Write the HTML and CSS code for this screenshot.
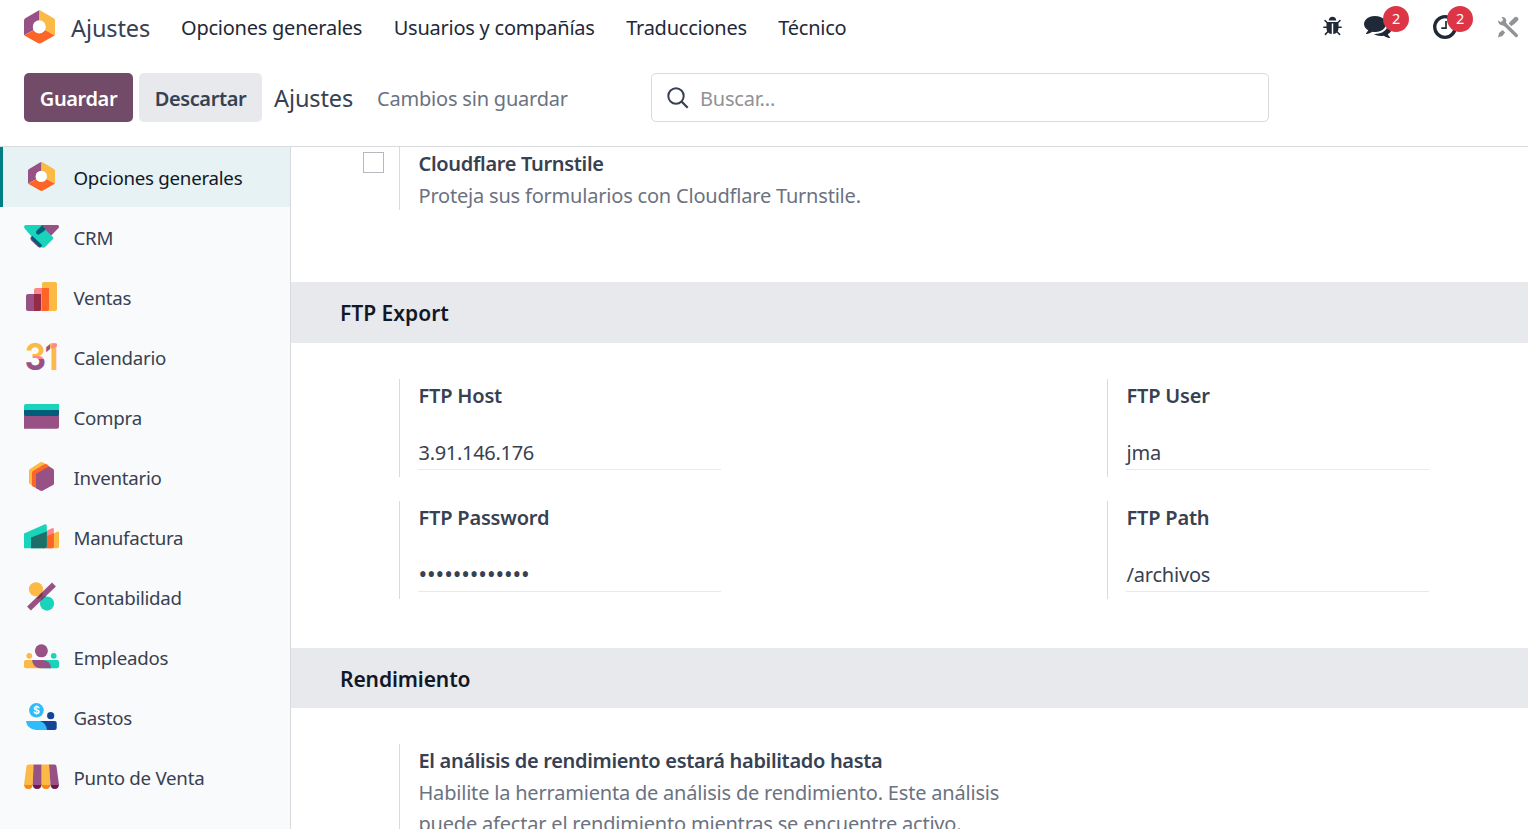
FILE: index.html
```html
<!DOCTYPE html>
<html lang="es">
<head>
<meta charset="utf-8">
<title>Ajustes</title>
<link rel="stylesheet" href="styles.css">
</head>
<body>
<svg width="0" height="0" class="defs" aria-hidden="true">
  <symbol id="hex" viewBox="0 0 27 29"><path fill="#985184" d="M13.500 0v14.500L0 21.600V8.800q0-1.300 1.100-1.900L12 .5q.8-.5 1.500-.5z"/><path fill="#fbb945" d="M13.500 0q.8 0 1.500.5l10.900 6.400q1.100.6 1.100 1.900v12.800L13.500 14.500z"/><path fill="#fc6526" d="M.3 21.600 13.500 14.500l13.200 7.100q-.2.400-.8.700L15 28.500q-1.500.8-3 0L1.100 22.300q-.6-.3-.8-.7z"/><circle cx="13.300" cy="14.400" r="5.700" fill="#fff"/></symbol>
</svg>

<header class="navbar">
  <svg class="brand-icon"><use href="#hex"/></svg>
  <span class="brand">Ajustes</span>
  <nav class="menu">
    <a>Opciones generales</a><a>Usuarios y compañías</a><a>Traducciones</a><a>Técnico</a>
  </nav>
  <div class="systray">
    <svg class="bug" viewBox="0 0 1792 1792"><path d="M1696 960q0 26-19 45t-45 19h-224q0 171-67 290l208 209q19 19 19 45t-19 45q-18 19-45 19t-45-19l-198-197q-5 5-15 13t-42 28.500-65 36.500-82 29-97 13v-896h-128v896q-51 0-101.500-13.500t-87-33-66-39-43.500-32.500l-15-14-183 207q-20 21-48 21-24 0-43-16-19-18-20.500-44.500t15.500-46.500l202-227q-58-114-58-274h-224q-26 0-45-19t-19-45 19-45 45-19h224v-294l-173-173q-19-19-19-45t19-45 45-19 45 19l173 173h844l173-173q19-19 45-19t45 19 19 45-19 45l-173 173v294h224q26 0 45 19t19 45zm-480-576h-640q0-133 93.500-226.500t226.500-93.500 226.500 93.500 93.500 226.500z"/></svg>
    <span class="tray chat">
      <svg viewBox="0 0 1792 1792"><path d="M1408 768q0 139-94 257t-256.500 186.500-353.500 68.500q-86 0-176-16-124 88-278 128-36 9-86 16h-3q-11 0-20.500-8t-11.500-21q-1-3-1-6.500t.5-6.500 2-6l2.500-5 3.500-5.500 4-5 4.500-5 4-4.500q5-6 23-25t26-29.500 22.500-29 25-38.500 20.500-44q-124-72-195-177t-71-224q0-139 94-257t256.500-186.500 353.500-68.500 353.500 68.500 256.500 186.500 94 257zm384 256q0 120-71 224.500t-195 176.500q10 24 20.500 44t25 38.500 22.500 29 26 29.500 23 25q1 1 4 4.500t4.500 5 4 5 3.500 5.500l2.500 5 2 6 .5 6.500-1 6.500q-3 14-13 22t-22 7q-50-7-86-16-154-40-278-128-90 16-176 16-271 0-472-132 58 4 88 4 161 0 309-45t264-129q125-92 192-212t67-254q0-77-23-152 129 71 204 178t75 230z"/></svg>
      <b class="badge">2</b>
    </span>
    <span class="tray clock">
      <svg viewBox="0 0 24 24"><circle cx="12" cy="12" r="10.300" fill="none" stroke="#1f2937" stroke-width="3.300"/><path d="M13 6v7.200H8.300" fill="none" stroke="#1f2937" stroke-width="1.700"/></svg>
      <b class="badge">2</b>
    </span>
    <svg class="tools" viewBox="0 0 22 22"><g stroke="#8f9499" fill="none"><path d="M6 6.500 19.300 19.500" stroke-width="3.300" stroke-linecap="round"/><path d="M13 8.700 16 6" stroke-width="4"/><path d="M16 6.200 19 3.200" stroke-width="4.600" stroke-linecap="round"/></g><path fill="#8f9499" d="M1 4.300 4 6.200 6.200 4 4.600 1Q8.300.5 9.300 4L9 7l1 1-2.500 2.600-1.200-1.200Q1 9.600 1 4.300zM5.500 14l2.600 2.600-2.600 3.400L1 21.500 2 17z"/></svg>
  </div>
</header>

<div class="panel">
  <button class="btn save">Guardar</button>
  <button class="btn discard">Descartar</button>
  <span class="crumb">Ajustes</span>
  <span class="dirty">Cambios sin guardar</span>
  <div class="search">
    <svg viewBox="0 0 22 22"><g fill="none" stroke="#374151" stroke-width="2"><circle cx="9" cy="9" r="7.700"/><path d="m14.500 14.500 6.200 6.200" stroke-width="2.300"/></g></svg>
    <span>Buscar...</span>
  </div>
</div>

<div class="body">
  <aside class="sidebar">
    <a class="tab active"><svg viewBox="0 0 35 35"><use href="#hex" x="4" y="3" width="27" height="29"/></svg><span>Opciones generales</span></a>
    <a class="tab"><svg viewBox="0 0 35 35"><path fill="#985184" d="M17 6h16.500q2.500.8 1 3L23.500 20.500 12 12zM7 17.500 18 27.500q-2.300 2.200-4.500 0l-6-5.700q-2-2-.5-4.300z"/><path fill="#1ad3bb" d="M1.500 6H17l12 12.200q.8 1-.2 2l-7.500 7.600q-2.500 1.700-4.600 0L.6 9.500Q-.8 7 1.500 6z"/><path d="m18 6.500-5.500 5.300q-1.500 3.500 2 4l5.100-3.300 2-2.200zM8.500 17 18 26q0 2.300-2.200 2.500L8 21q-1.700-2-.5-3.800z" fill="#005e7a"/></svg><span>CRM</span></a>
    <a class="tab"><svg viewBox="0 0 35 35"><path fill="#fbb945" d="M20 3h11q2 0 2 2v25q0 2-2 2H18V5q0-2 2-2z"/><path fill="#fc868b" d="M12 9h13v21q0 2-2 2H10V11q0-2 2-2z"/><path fill="#fc6526" d="M18 9h7v21q0 2-2 2h-5z"/><path fill="#985184" d="M4 15h13v15q0 2-2 2H4q-2 0-2-2V17q0-2 2-2z"/><path fill="#962b48" d="M10 15h7v15q0 2-2 2h-5z"/></svg><span>Ventas</span></a>
    <a class="tab"><svg class="wide" viewBox="0 0 35 35"><defs><linearGradient id="g3" x1="0" y1="0" x2="0" y2="1"><stop offset=".5" stop-color="#fbb945"/><stop offset=".5" stop-color="#fc868b"/><stop offset=".56" stop-color="#fc868b"/><stop offset=".56" stop-color="#985184"/></linearGradient><linearGradient id="g1"><stop offset=".4" stop-color="#985184"/><stop offset=".4" stop-color="#fbb945"/></linearGradient></defs><text class="digit" transform="translate(.8 31) scale(.9 1)" fill="url(#g3)">3</text><text class="digit" transform="translate(20.800 31) scale(.87 1)" fill="url(#g1)">1</text><path fill="#fc868b" d="m27.500 6.300 2-1.600H33v2.500L27.500 10z"/></svg><span>Calendario</span></a>
    <a class="tab"><svg viewBox="0 0 35 35"><path fill="#985184" d="M0 12h35v15.700q0 2-2 2H0z"/><path fill="#1ad3bb" d="M2 5h33v7H0V7q0-2 2-2z"/><path fill="#005e7a" d="M0 11h35v4q0 2-2 2H2q-2 0-2-2z"/></svg><span>Compra</span></a>
    <a class="tab"><svg viewBox="0 0 35 35"><path fill="#fbb945" d="M5 11.500q0-1 1-1.600L16 3.500q1.500-.8 3 0L24 6 9 27.500 6 25q-1-.6-1-1.600z"/><path fill="#fc6526" d="M8 13.500q0-1 1-1.600L20 5.500q1.500-.8 3 0L26 8 13 29.500 9 27.500q-1-.6-1-1.600z"/><path fill="#985184" d="M12 16q0-1.200 1-1.800L24 8q1-.6 2 0l3.200 2q.8.500.8 1.500v13q0 1-1 1.600L19 31.600q-1.500.8-3 0L12 29.200z"/></svg><span>Inventario</span></a>
    <a class="tab"><svg viewBox="0 0 35 35"><path fill="#fbb945" d="M26 16l8-3.500q1 0 1 1V27.300q0 2-2 2h-7z"/><path fill="#fc868b" d="M19 13.500 28.500 9q1.300 0 1.300 1V27.300q0 2-2 2H19z"/><path fill="#fc6526" d="M22 17.500 29.800 14V27.300q0 2-2 2H22z"/><path fill="#1ad3bb" d="M0 14.500 21 5.200q1.800-.2 1.800 1.500V27.300q0 2-2 2H0z"/><path fill="#1e6f67" d="M7 18.500 22.800 12.500V27.300q0 2-2 2H7z"/></svg><span>Manufactura</span></a>
    <a class="tab"><svg viewBox="0 0 35 35"><circle cx="12" cy="10.300" r="7.100" fill="#fbb945"/><circle cx="23" cy="24.600" r="7.100" fill="#1ad3bb"/><path d="M5 29.500 30 5.500" stroke="#985184" stroke-width="5.500"/><path d="m12.300 19.500 6.500-6.300q0 5-5 6.500z" fill="#7a2f3d"/><path d="m16.500 22 6-5.600q-5.300.8-6 5.600z" fill="#4d4a80"/></svg><span>Contabilidad</span></a>
    <a class="tab"><svg viewBox="0 0 35 35"><circle cx="17.400" cy="11.800" r="6.500" fill="#985184"/><circle cx="5.300" cy="16.800" r="2.900" fill="#fbb945"/><circle cx="29.700" cy="16.800" r="2.900" fill="#1ad3bb"/><rect y="21" width="20" height="8.300" rx="2" fill="#fbb945"/><rect x="17" y="21" width="18" height="8.300" rx="2" fill="#1ad3bb"/><path d="M8 21h11q8 1 8 8.300H16q-7-.5-8-8.300z" fill="#985184"/></svg><span>Empleados</span></a>
    <a class="tab"><svg viewBox="0 0 35 35"><circle cx="12.400" cy="11.300" r="7.300" fill="#2ebcfa"/><text class="coin" x="12.400" y="15.200">$</text><circle cx="26.700" cy="16.700" r="3.600" fill="#144496"/><rect x="13" y="22" width="19.700" height="9" rx="2" fill="#144496"/><path d="M2 22h14q6 1.500 7 9H12Q3 30 2 22z" fill="#2ebcfa"/></svg><span>Gastos</span></a>
    <a class="tab"><svg viewBox="0 0 35 35"><path d="M0 25h8.700q0 5-4.300 5T0 25zM17.500 25h9q0 5-4.500 5t-4.500-5z" fill="#f78613"/><path d="M8.700 25h8.800q0 5-4.400 5t-4.400-5zM26.500 25H35q0 5-4.200 5t-4.300-5z" fill="#70164f"/><path d="M4.500 5.500H9.500L8.700 26H0L2.500 7.300q.2-1.800 2-1.800zM17.500 5.500h7.500L26.500 26h-9z" fill="#fbb945"/><path d="M9.500 5.500h8V26H8.700zM25 5.500h5.500q1.800 0 2 1.800L35 26h-8.500z" fill="#985184"/></svg><span>Punto de Venta</span></a>
  </aside>

  <main class="content">
    <div class="row first">
      <div class="check"><i class="box"></i></div>
      <div class="setting">
        <div class="label">Cloudflare Turnstile</div>
        <div class="help">Proteja sus formularios con Cloudflare Turnstile.</div>
      </div>
    </div>
    <h2 class="section">FTP Export</h2>
    <div class="fields">
      <div class="setting field"><div class="label">FTP Host</div><div class="value ip">3.91.146.176</div></div>
      <div class="setting field"><div class="label">FTP User</div><div class="value">jma</div></div>
      <div class="setting field"><div class="label">FTP Password</div><div class="value dots">•••••••••••••</div></div>
      <div class="setting field"><div class="label">FTP Path</div><div class="value">/archivos</div></div>
    </div>
    <h2 class="section short">Rendimiento</h2>
    <div class="row perf">
      <div class="check"></div>
      <div class="setting">
        <div class="label">El análisis de rendimiento estará habilitado hasta</div>
        <div class="help">Habilite la herramienta de análisis de rendimiento. Este análisis<br>puede afectar el rendimiento mientras se encuentre activo.</div>
      </div>
    </div>
  </main>
</div>
</body>
</html>
```
FILE: styles.css
```css
* { box-sizing: border-box; }
body {
  margin: 0;
  height: 829px;
  overflow: hidden;
  display: flex;
  flex-direction: column;
  background: #fff;
  color: #374151;
  font: 20px/31.5px "Noto Sans", "Open Sans", sans-serif;
  letter-spacing: -.2px;
  white-space: nowrap;
}
.defs { position: absolute; }
svg { display: block; flex: none; }

.navbar { display: flex; align-items: center; height: 56px; padding: 0 9px 0 24px; }
.brand-icon { width: 31px; height: 34px; margin-top: -3px; }
.brand { flex: none; width: 126px; padding: 1px 0 0 16px; font-size: 23.5px; letter-spacing: -.1px; }
.menu { display: flex; gap: 31.5px; color: #1f2937; letter-spacing: -.24px; }
.systray { display: flex; align-items: center; margin-left: auto; fill: #1f2937; height: 52px; margin-top: -3px; }
.bug { width: 21px; height: 21px; margin-right: 21px; }
.tray { position: relative; }
.chat { width: 69px; }
.chat svg { width: 28px; height: 28px; margin-top: -2px; }
.clock { width: 64px; }
.clock svg { width: 24px; height: 24px; }
.tools { width: 22px; height: 22px; }
.badge {
  position: absolute;
  width: 26px;
  height: 26px;
  border-radius: 50%;
  background: #dc3545;
  color: #fff;
  font-size: 14.5px;
  font-weight: 400;
  line-height: 25px;
  text-align: center;
}
.chat .badge { left: 19px; top: -8px; }
.clock .badge { left: 14px; top: -9px; }

.panel { display: flex; align-items: center; height: 91px; padding: 0 24px 7px; border-bottom: 1px solid #d8dadd; }
.btn {
  flex: none;
  height: 49px;
  border: 0;
  border-radius: 5px;
  padding: 1px 0 0;
  font: 600 20px "Noto Sans", sans-serif;
  letter-spacing: -.4px;
}
.save { width: 109px; background: #714b67; color: #fff; }
.discard { width: 123px; margin-left: 6px; background: #e7e9ed; color: #374151; }
.crumb { flex: none; width: 115px; padding: 2px 0 0 12px; font-size: 23.5px; letter-spacing: -.1px; }
.dirty { flex: none; width: 274px; padding-top: 2px; color: #6b7280; }
.search {
  flex: none;
  display: flex;
  align-items: center;
  width: 618px;
  height: 49px;
  padding-left: 15px;
  border: 1px solid #d8dadd;
  border-radius: 5px;
  color: #8f9296;
}
.search svg { width: 22px; height: 22px; margin-right: 11px; }
.search span { padding-top: 2px; }

.body { display: flex; flex: 1; min-height: 0; }
.sidebar { flex: none; width: 291px; background: #f9fafb; border-right: 1px solid #d8dadd; }
.tab { display: flex; align-items: center; height: 60px; padding: 0 0 0 24px; font-size: 18.7px; letter-spacing: -.25px; }
.tab svg { width: 35px; height: 35px; margin: -2px 14.5px 0 0; }
.tab .wide { overflow: visible; }
.tab span { padding-top: 1px; }
.tab.active { background: #e6f2f3; color: #111827; box-shadow: inset 3px 0 #017e84; }
.digit { font: 700 36.5px/1 Inter, sans-serif; letter-spacing: 0; }
.coin { font: 700 10.5px/1 Inter, sans-serif; letter-spacing: 0; fill: #fff; text-anchor: middle; }

.content { flex: 1; min-width: 0; overflow: hidden; }
.row { display: flex; }
.first { height: 135px; }
.check { flex: none; width: 108px; padding: 5px 0 0 72px; }
.box { display: block; width: 21px; height: 21px; border: 1px solid #b5b8bd; }
.setting { border-left: 1px solid #d8dadd; padding-left: 18.5px; }
.first .setting { height: 63px; padding-top: 1px; }
.label { font-weight: 600; letter-spacing: -.32px; }
.help { color: #6b7280; }
.section {
  display: flex;
  align-items: center;
  height: 61px;
  margin: 0;
  padding: 2px 0 0 49px;
  background: #e7e9ed;
  color: #111827;
  font-size: 21px;
  font-weight: 600;
  letter-spacing: 0;
}
.short { height: 60px; padding-top: 3px; letter-spacing: -.1px; }
.fields { display: grid; grid-template-columns: 303px 303px; column-gap: 405px; row-gap: 24px; padding: 36px 0 48px 108px; height: 305px; align-content: start; }
.field { width: 322px; height: 98px; padding-top: 1px; }
.field .label { letter-spacing: -.2px; }
.value { margin: 25px 0 0 -.5px; height: 33px; padding-left: .5px; border-bottom: 1px solid #e7e9ed; }
.ip { letter-spacing: -.3px; }
.dots { font-size: 23px; letter-spacing: -.1px; }
.perf { padding-top: 36px; }
.perf .setting { height: 110px; padding-top: 1px; }
```
